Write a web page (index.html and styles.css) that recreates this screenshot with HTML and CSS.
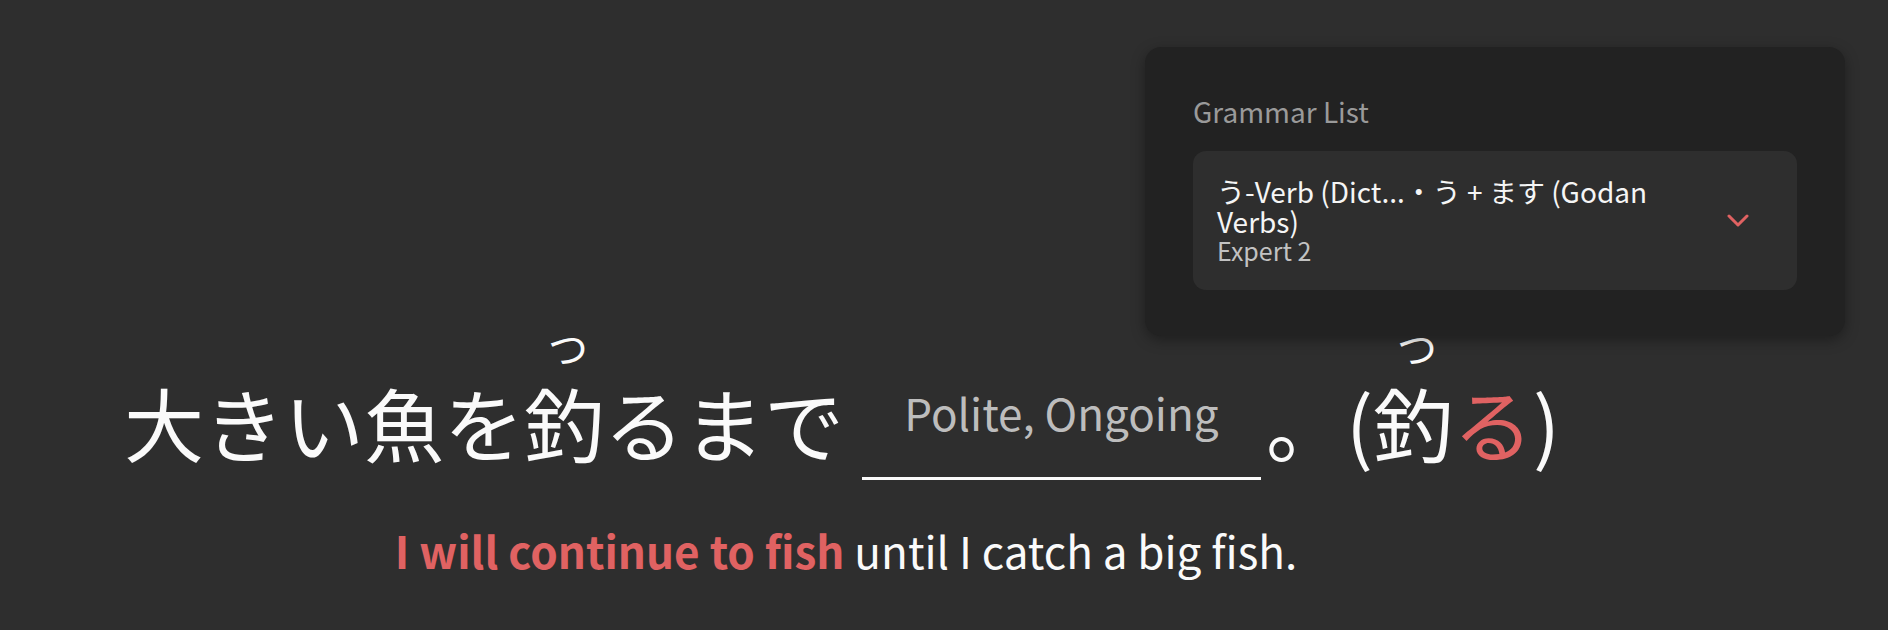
FILE: index.html
```html
<!DOCTYPE html>
<html lang="ja">
<head>
  <meta charset="UTF-8">
  <meta name="viewport" content="width=device-width, initial-scale=1">
  <title>Grammar Practice</title>
  <link rel="stylesheet" href="styles.css">
</head>
<body>
  <main class="practice">
    <p class="question">
      <span>大きい魚を<ruby>釣<rt>つ</rt></ruby>るまで</span><input class="answer" type="text" placeholder="Polite, Ongoing"><span>。(<ruby>釣<rt>つ</rt></ruby><span class="ending">る</span>)</span>
    </p>
    <p class="translation"><strong>I will continue to fish</strong> until I catch a big fish.</p>
  </main>

  <aside class="grammar-panel">
    <h2>Grammar List</h2>
    <div class="grammar-select">
      <div class="grammar-info">
        <div class="grammar-title">う-Verb (Dict...・う + ます (Godan Verbs)</div>
        <div class="grammar-level">Expert 2</div>
      </div>
      <svg class="chevron" width="22" height="13" viewBox="0 0 22 13">
        <polyline points="2,2 11,11 20,2" fill="none" stroke="#e06262" stroke-width="3" stroke-linecap="round" stroke-linejoin="round"/>
      </svg>
    </div>
  </aside>
</body>
</html>
```

FILE: styles.css
```css
body {
  font-family: 'Noto Sans CJK JP', 'Noto Sans', sans-serif;
  background: #2e2e2e;
  color: #fafafa;
  margin: 0;
  height: 100vh;
  overflow: hidden;
}

.practice {
  display: flex;
  flex-direction: column;
  align-items: center;
  padding: 344px 204px 0 0;
}

.question {
  margin: 0;
  font-size: 80px;
  line-height: 120px;
  white-space: nowrap;
}

/* furigana sits a little higher than the browser default */
.question rt {
  position: relative;
  top: -16px;
  left: 4px;
  font-size: 40px;
}

.ending {
  color: #e06262;
}

.answer {
  width: 399px;
  margin: 0 5px 0 18px;
  padding: 0 0 33px;
  font-family: inherit;
  font-size: 44px;
  color: #fafafa;
  text-align: center;
  background: transparent;
  border: none;
  border-bottom: 3px solid #fafafa;
  vertical-align: 25px;
  outline: none;
}

.answer::placeholder {
  color: #bdbdbd;
}

.translation {
  margin: 39px 0 0 8px;
  font-size: 44px;
  line-height: 60px;
}

.translation strong {
  color: #e06262;
  font-weight: 700;
}

.grammar-panel {
  position: absolute;
  top: 47px;
  right: 43px;
  width: 700px;
  box-sizing: border-box;
  padding: 39px 48px 46px;
  background: #222222;
  border-radius: 16px;
  box-shadow: 0 4px 14px rgba(0, 0, 0, 0.35);
}

.grammar-panel h2 {
  margin: 0 0 15px;
  font-size: 28px;
  font-weight: 400;
  line-height: 50px;
  color: #9a9a9a;
}

.grammar-select {
  display: flex;
  align-items: center;
  padding: 25px 48px 25px 24px;
  background: #2e2e2e;
  border-radius: 13px;
}

.grammar-info {
  flex: 1;
  max-width: 480px;
}

.grammar-title {
  font-size: 28px;
  line-height: 30px;
  color: #f5f5f5;
}

.grammar-level {
  font-size: 25px;
  line-height: 29px;
  color: #c2c2c2;
}

.chevron {
  margin-left: auto;
}
```
